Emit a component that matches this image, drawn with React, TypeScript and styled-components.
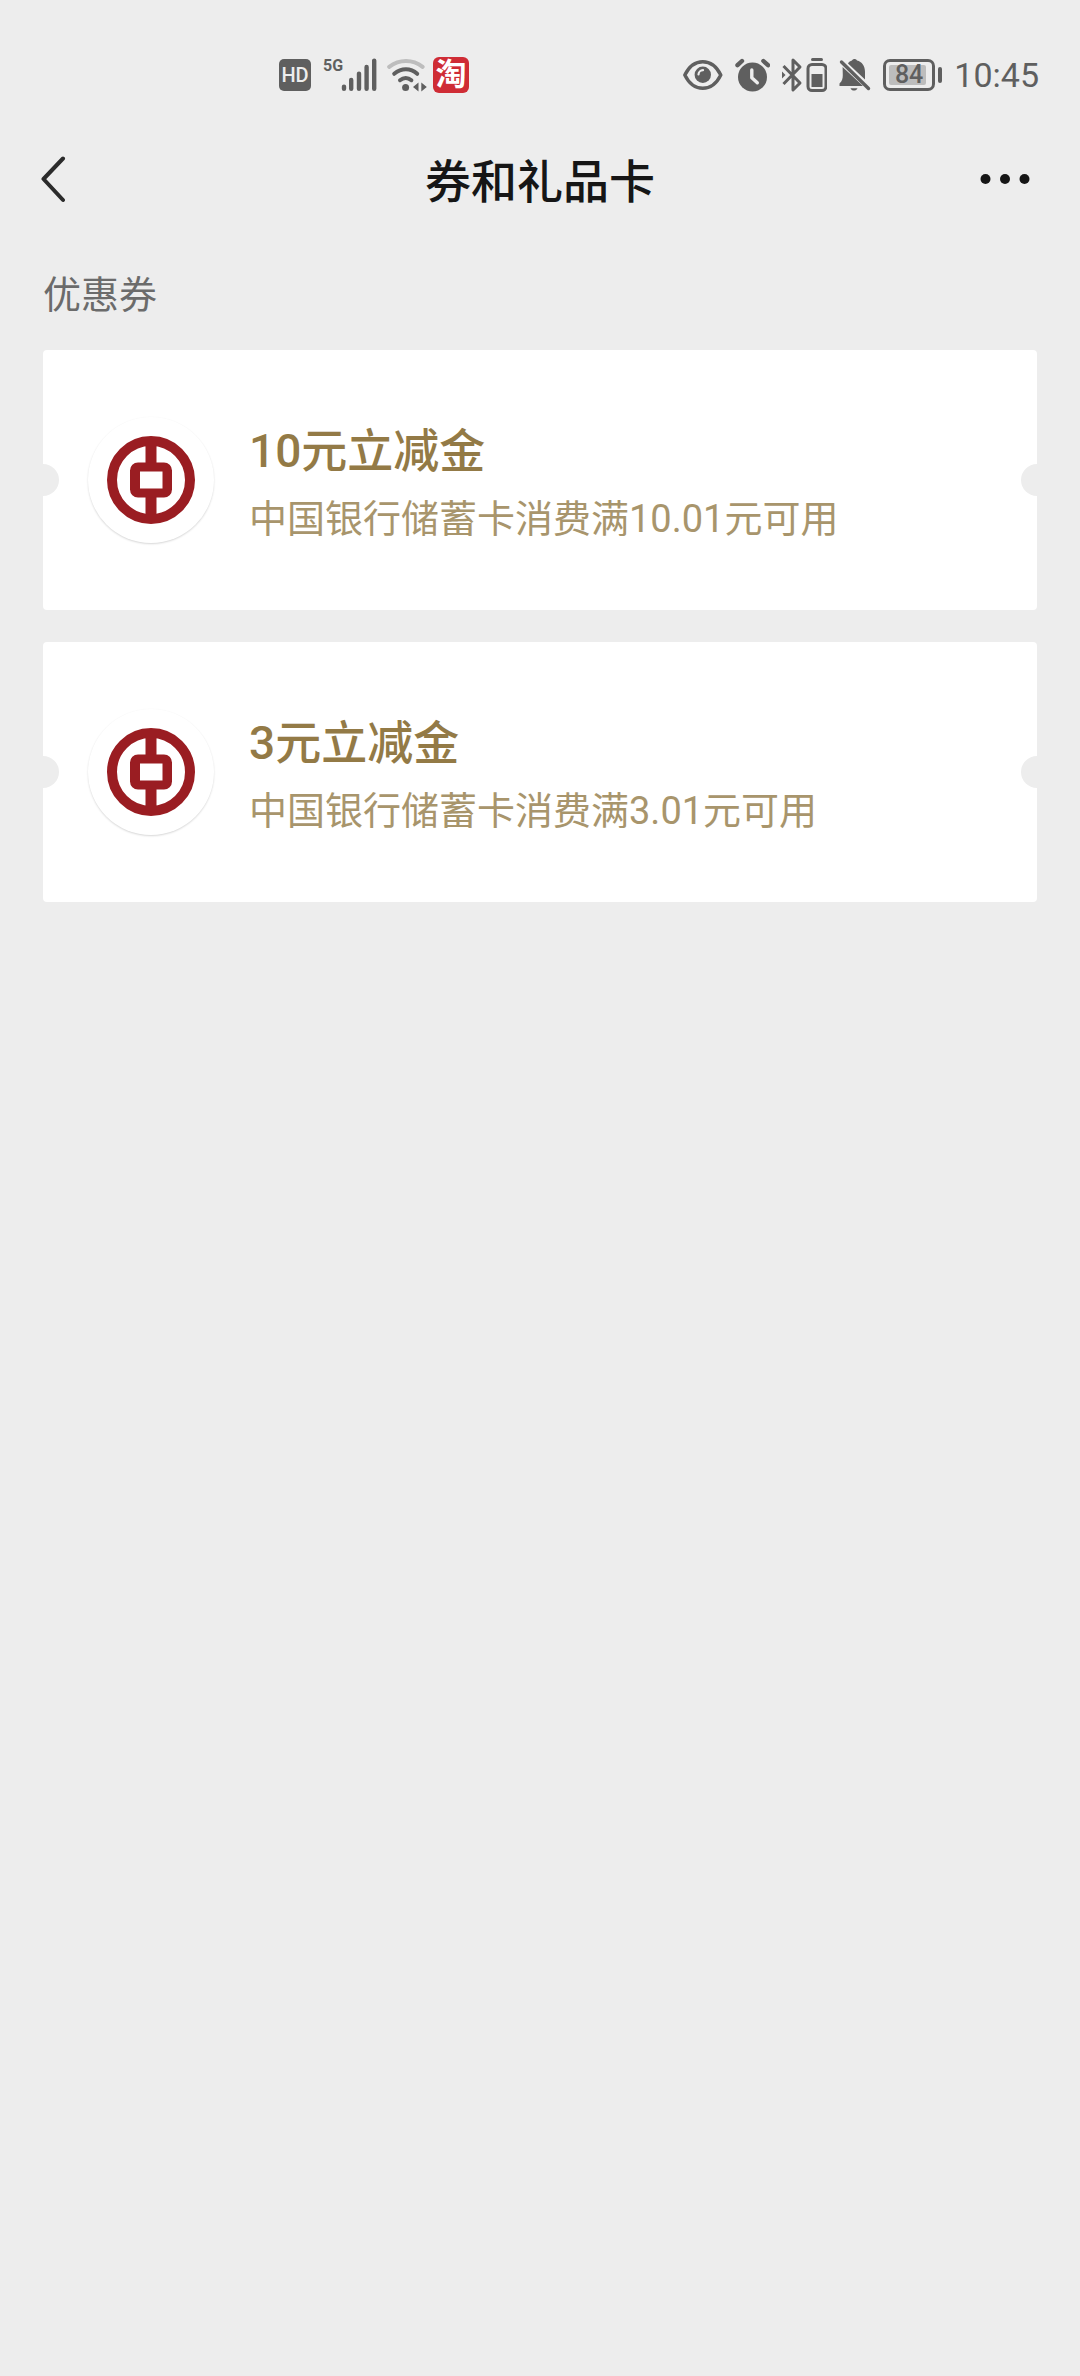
import React from "react";
import styled, { createGlobalStyle } from "styled-components";

const PAGE_BG = "#ededed";
const STATUS = "#5f5f5f";
const FONT = '"Roboto", "Noto Sans CJK SC", sans-serif';

const GlobalStyle = createGlobalStyle`
  *, *::before, *::after { box-sizing: border-box; }
  body { margin: 0; background: ${PAGE_BG}; font-family: ${FONT}; }
`;

const Screen = styled.div`
  min-height: 100vh;
  background: ${PAGE_BG};
`;

const StatusBar = styled.div`
  display: flex;
  justify-content: space-between;
  align-items: center;
  padding: 50px 41px 0 279px;
  color: ${STATUS};
`;

const StatusGroup = styled.div<{ $gap: number }>`
  display: flex;
  align-items: center;
  height: 50px;
  gap: ${(p) => p.$gap}px;

  svg {
    display: block;
    flex: none;
  }
`;

const HdBadge = styled.span`
  width: 32px;
  height: 32px;
  border-radius: 5px;
  background: ${STATUS};
  color: ${PAGE_BG};
  font-size: 20px;
  font-weight: 500;
  line-height: 32px;
  text-align: center;
`;

const AppBadge = styled.span`
  width: 36px;
  height: 36px;
  border-radius: 6px;
  background: #cf2c35;
  color: #fff;
  font-size: 31px;
  font-weight: 700;
  line-height: 35px;
  text-align: center;
`;

const Network = styled.span`
  display: flex;
  width: 64px;
  height: 34px;
  padding: 0 4px 0 6px;
  justify-content: space-between;
`;

const NetworkLabel = styled.span`
  width: 18px;
  font-size: 16px;
  font-weight: 700;
  line-height: 16px;
`;

const BatteryShell = styled.span`
  display: flex;
  align-items: center;
  gap: 3px;

  &::after {
    content: "";
    width: 4px;
    height: 16px;
    border-radius: 2px;
    background: ${STATUS};
  }
`;

const BatteryBody = styled.span`
  width: 52px;
  height: 32px;
  padding: 3px;
  border: 3px solid ${STATUS};
  border-radius: 7px;
`;

const BatteryFill = styled.span`
  display: block;
  width: 37px;
  height: 20px;
  border-radius: 2px;
  background: #bdbdbd;
  font-size: 25px;
  font-weight: 500;
  line-height: 20px;
  text-align: right;
  padding-right: 3px;
`;

const Clock = styled.time`
  font-size: 34px;
  line-height: 40px;
`;

const NavBar = styled.header`
  display: grid;
  grid-template-columns: 120px 1fr 120px;
  align-items: center;
  height: 160px;
  color: #161616;
`;

const NavButton = styled.button<{ $end?: boolean }>`
  display: flex;
  justify-content: ${(p) => (p.$end ? "flex-end" : "flex-start")};
  padding: ${(p) => (p.$end ? "24px 50px 24px 0" : "24px 0 24px 40px")};
  border: 0;
  background: none;
  color: inherit;
  cursor: pointer;

  svg {
    display: block;
    flex: none;
  }
`;

const PageTitle = styled.h1`
  margin: 0;
  padding-top: 4px;
  font-size: 46px;
  font-weight: 500;
  line-height: 68px;
  text-align: center;
`;

const Section = styled.main`
  padding: 0 43px;
`;

const SectionTitle = styled.h2`
  margin: 0 0 20px;
  color: #6b6b6b;
  font-size: 38px;
  font-weight: 400;
  line-height: 70px;
`;

const CouponList = styled.ul`
  display: grid;
  gap: 32px;
  margin: 0;
  padding: 0;
  list-style: none;
`;

const Coupon = styled.li`
  position: relative;
  display: flex;
  align-items: center;
  gap: 35px;
  min-height: 260px;
  padding: 0 45px;
  border-radius: 4px;
  background: #fff;
  overflow: hidden;

  &::before,
  &::after {
    content: "";
    position: absolute;
    top: calc(50% - 16px);
    width: 32px;
    height: 32px;
    border-radius: 50%;
    background: ${PAGE_BG};
  }
  &::before { left: -16px; }
  &::after { right: -16px; }
`;

const LogoDisc = styled.div`
  display: flex;
  flex: none;
  align-items: center;
  justify-content: center;
  width: 126px;
  height: 126px;
  border-radius: 50%;
  background: #fff;
  box-shadow: 0 1px 2px rgba(0, 0, 0, 0.16);
`;

const CouponInfo = styled.div`
  padding-top: 2px;
`;

const CouponName = styled.h3`
  margin: 0;
  color: #937a46;
  font-size: 46px;
  font-weight: 500;
  line-height: 76px;
`;

const CouponRule = styled.p`
  margin: 0;
  color: #a8956c;
  font-size: 38px;
  line-height: 60px;
`;

const SignalBars = () => (
  <svg width="36" height="34" viewBox="0 0 36 34" stroke="currentColor" strokeWidth="4.4" strokeLinecap="round">
    <path d="M3 28.6v2.2M10.2 22v8.8M18 15.6v15.2M25.6 9v21.8M33.2 2.6v28.2" />
  </svg>
);

const WifiIcon = () => (
  <svg width="40" height="34" viewBox="0 0 40 34" fill="none" strokeWidth="4" strokeLinecap="round">
    <path d="M2.2 8.8C12.5 1 25.5 1 35.6 8.8" stroke="#bdbdbd" />
    <path d="M7.2 15.8C14.5 9.7 23.500 9.7 30.2 15.8" stroke="currentColor" />
    <path d="M13 22.2C16.5 19.4 21 19.4 24.4 22.2" stroke="currentColor" />
    <circle cx="18.6" cy="29.4" r="3.5" fill="currentColor" />
    <path d="M31.500 24.5v9l-5.5-4.5zM34.3 24.5v9l5.5-4.5z" fill="currentColor" />
  </svg>
);

const EyeIcon = () => (
  <svg width="40" height="32" viewBox="0 0 40 32" fill="none">
    <path d="M1.8 16C6 7.5 12.5 2.7 19.8 2.7S33.6 7.5 37.8 16C33.6 24.5 27 29.3 19.8 29.3S6 24.5 1.8 16z" stroke="currentColor" strokeWidth="3.4" strokeLinejoin="round" />
    <circle cx="19.8" cy="15.8" r="8.2" fill="currentColor" />
    <path d="M15.5 15.5a4.5 4.5 0 0 1 4.5-4.3" stroke="#ededed" strokeWidth="2.2" strokeLinecap="round" />
  </svg>
);

const AlarmIcon = () => (
  <svg width="35" height="34" viewBox="0 0 35 34" fill="none" strokeLinecap="round">
    <circle cx="17.5" cy="19" r="14.5" fill="currentColor" />
    <path d="M2.5 7.2L7 3M28.4 3L33 7.2" stroke="currentColor" strokeWidth="4.4" />
    <path d="M16.8 12v7.8l5.5 5" stroke="#ededed" strokeWidth="3.4" strokeLinejoin="round" />
  </svg>
);

const BluetoothIcon = () => (
  <svg width="45" height="36" viewBox="0 0 45 36" fill="none" stroke="currentColor" strokeWidth="3">
    <path d="M1.5 9L18 26l-7 7V3l7 7L1.5 27" strokeLinejoin="round" />
    <path d="M0 14.5l3.5 3.5L0 21.5z" fill="currentColor" stroke="none" />
    <path d="M30.500 2.500h9" strokeLinecap="round" />
    <rect x="26" y="7.5" width="18" height="26" rx="4" />
    <rect x="29.5" y="17" width="11" height="13" fill="currentColor" stroke="none" />
  </svg>
);

const BellOffIcon = () => (
  <svg width="32" height="34" viewBox="0 0 32 34">
    <path d="M3.6 9L24 28H.5v-2.5c2.6-2.5 3.3-4.8 3.3-8.5z" fill="currentColor" />
    <path d="M9 5.5c1-1.7 2.3-2.6 4-3 1-2 4-2 5 0 5 1.2 8 5.5 8 11.3v7.700z" fill="currentColor" />
    <path d="M11.5 30.2h7c-.6 1.5-2 2.3-3.500 2.3s-2.9-.8-3.5-2.3z" fill="currentColor" />
    <path d="M2.5 4L29.5 30.5" stroke="currentColor" strokeWidth="3.4" strokeLinecap="round" />
  </svg>
);

const BackIcon = () => (
  <svg width="26" height="48" viewBox="0 0 26 48" fill="none" stroke="#2b2b2b" strokeWidth="4" strokeLinecap="round" strokeLinejoin="round">
    <path d="M23 2.5L3.5 23L23 44" />
  </svg>
);

const MoreIcon = () => (
  <svg width="50" height="12" viewBox="0 0 50 12" fill="currentColor">
    <circle cx="5.5" cy="5" r="5" />
    <circle cx="25" cy="5" r="5" />
    <circle cx="44.5" cy="5" r="5" />
  </svg>
);

const BankLogo = () => (
  <svg width="88" height="88" viewBox="0 0 88 88" fill="none" stroke="#9a1d22">
    <circle cx="44" cy="44" r="39" strokeWidth="10" />
    <path d="M44 6v24M44 58v24" strokeWidth="11" />
    <path
      d="M31 26.5h26a8 8 0 0 1 8 8v19a8 8 0 0 1-8 8H31a8 8 0 0 1-8-8v-19a8 8 0 0 1 8-8zM33 35.5v17h22.500v-17z"
      fill="#9a1d22"
      fillRule="evenodd"
      stroke="none"
    />
  </svg>
);

const coupons = [
  { name: "10元立减金", rule: "中国银行储蓄卡消费满10.01元可用" },
  { name: "3元立减金", rule: "中国银行储蓄卡消费满3.01元可用" },
];

export default function App() {
  return (
    <Screen>
      <GlobalStyle />
      <StatusBar>
        <StatusGroup $gap={6}>
          <HdBadge>HD</HdBadge>
          <Network>
            <NetworkLabel>5G</NetworkLabel>
            <SignalBars />
          </Network>
          <WifiIcon />
          <AppBadge>淘</AppBadge>
        </StatusGroup>
        <StatusGroup $gap={12}>
          <EyeIcon />
          <AlarmIcon />
          <BluetoothIcon />
          <BellOffIcon />
          <BatteryShell>
            <BatteryBody>
              <BatteryFill>84</BatteryFill>
            </BatteryBody>
          </BatteryShell>
          <Clock>10:45</Clock>
        </StatusGroup>
      </StatusBar>
      <NavBar>
        <NavButton type="button" aria-label="返回">
          <BackIcon />
        </NavButton>
        <PageTitle>券和礼品卡</PageTitle>
        <NavButton type="button" aria-label="更多" $end>
          <MoreIcon />
        </NavButton>
      </NavBar>
      <Section>
        <SectionTitle>优惠券</SectionTitle>
        <CouponList>
          {coupons.map((c) => (
            <Coupon key={c.name}>
              <LogoDisc>
                <BankLogo />
              </LogoDisc>
              <CouponInfo>
                <CouponName>{c.name}</CouponName>
                <CouponRule>{c.rule}</CouponRule>
              </CouponInfo>
            </Coupon>
          ))}
        </CouponList>
      </Section>
    </Screen>
  );
}
